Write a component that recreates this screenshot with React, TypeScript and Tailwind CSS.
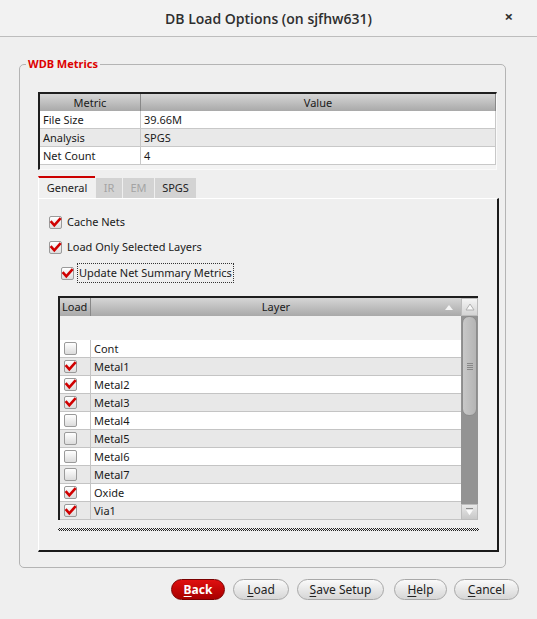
import React from 'react';

const FONT = { fontFamily: '"Noto Sans", "Open Sans", sans-serif' };

function Check({ on }: { on: boolean }) {
  return (
    <span className="relative inline-block w-[13px] h-[13px] rounded-[2px] border border-[#9a9a9a] bg-gradient-to-b from-[#ffffff] to-[#dcdcdc] shrink-0">
      {on && (
        <svg viewBox="0 0 13 13" className="absolute left-[-1px] top-[-1px] w-[13px] h-[13px]">
          <path d="M2.5 6.2 L5.3 9.3 L10.8 3.2" fill="none" stroke="#d00000" strokeWidth="2.6" strokeLinecap="square" strokeLinejoin="miter" />
        </svg>
      )}
    </span>
  );
}

function Btn({ label, w, primary }: { label: string; w: number; primary?: boolean }) {
  const first = label.charAt(0);
  const rest = label.slice(1);
  return (
    <button
      style={{ width: w }}
      className={
        primary
          ? 'h-[21px] rounded-full border border-[#7a0000] bg-gradient-to-b from-[#e01010] to-[#a80000] text-white font-bold text-[12px] leading-none'
          : 'h-[21px] rounded-full border border-[#a8a8a8] bg-gradient-to-b from-[#fafafa] to-[#d6d6d6] text-[#222] text-[12px] leading-none'
      }
    >
      <span className="underline underline-offset-2">{first}</span>
      {rest}
    </button>
  );
}

const metrics = [
  ['File Size', '39.66M'],
  ['Analysis', 'SPGS'],
  ['Net Count', '4'],
];

const layers: [string, boolean][] = [
  ['Cont', false],
  ['Metal1', true],
  ['Metal2', true],
  ['Metal3', true],
  ['Metal4', false],
  ['Metal5', false],
  ['Metal6', false],
  ['Metal7', false],
  ['Oxide', true],
  ['Via1', true],
];

export default function App() {
  return (
    <div style={FONT} className="w-[537px] h-[619px] bg-[#efefef] flex flex-col text-[11px] text-[#1a1a1a] overflow-hidden">
      {/* title bar */}
      <div className="relative h-[37px] shrink-0 bg-[#f2f2f2] border-b border-[#bdbdbd] flex items-center justify-center">
        <span style={{ fontFamily: '"Open Sans", "Noto Sans", sans-serif' }} className="text-[14px] text-[#2e2e2e] font-semibold">
          DB Load Options (on sjfhw631)
        </span>
        <span className="absolute right-[24px] top-[9px] text-[15px] font-bold text-[#2e2e2e] leading-none">×</span>
      </div>

      {/* group box */}
      <div className="relative ml-[19px] mt-[27px] w-[487px] h-[504px] border border-[#b4b4b4] rounded-[5px] pt-[27px] pl-[18px]">
        <span className="absolute left-[6px] top-[-9px] px-[2px] bg-[#efefef] text-[#dd0000] font-bold text-[11px] leading-[16px]">
          WDB Metrics
        </span>

        {/* metrics table */}
        <div className="w-[459px] h-[78px] border-t-2 border-l-2 border-[#1e1e1e] border-r border-b border-r-[#fafafa] border-b-[#fafafa] bg-[#f3f3f3]">
          <div className="flex h-[17px] bg-gradient-to-b from-[#d6d6d6] to-[#a9a9a9]">
            <div className="w-[101px] border-r border-[#888] text-center leading-[17px]">Metric</div>
            <div className="flex-1 text-center leading-[17px] border-r border-[#888]">Value</div>
          </div>
          {metrics.map(([k, v], i) => (
            <div key={k} className={`flex h-[18px] border-b border-[#c8c8c8] ${i === 1 ? 'bg-[#e9e9e9]' : 'bg-white'}`}>
              <div className="w-[101px] border-r border-[#c8c8c8] pl-[3px] leading-[17px]">{k}</div>
              <div className="flex-1 pl-[3px] leading-[17px] border-r border-[#c8c8c8]">{v}</div>
            </div>
          ))}
        </div>

        {/* tabs */}
        <div className="mt-[6px] flex h-[22px] items-end">
          <div className="h-[22px] w-[57px] border-t-2 border-[#cc0000] border-l border-l-white bg-[#f0f0f0] text-center leading-[19px] text-[#222]">General</div>
          <div className="h-[20px] w-[26px] ml-[1px] bg-[#d3d3d3] text-center leading-[20px] text-[#a4a4a4]">IR</div>
          <div className="h-[20px] w-[31px] ml-[1px] bg-[#d3d3d3] text-center leading-[20px] text-[#a4a4a4]">EM</div>
          <div className="h-[20px] w-[41px] ml-[1px] bg-[#d3d3d3] text-center leading-[20px] text-[#222]">SPGS</div>
        </div>

        {/* tab pane */}
        <div className="w-[461px] h-[354px] border-t border-l border-white border-r-2 border-b-2 border-r-[#1a1a1a] border-b-[#1a1a1a] pl-[10px] pt-[16px]">
          <div className="flex items-center gap-[5px] h-[14px]">
            <Check on />
            <span>Cache Nets</span>
          </div>
          <div className="flex items-center gap-[5px] h-[14px] mt-[11px]">
            <Check on />
            <span>Load Only Selected Layers</span>
          </div>
          <div className="flex items-center gap-[3px] h-[20px] mt-[9px] pl-[12px]">
            <Check on />
            <span className="border border-dotted border-[#333] px-[1px] leading-[18px]">Update Net Summary Metrics</span>
          </div>

          {/* layer table */}
          <div className="ml-[9px] mt-[13px] w-[420px] h-[224px] border-t-2 border-l-2 border-[#1e1e1e] flex">
            <div className="flex-1 flex flex-col bg-[#f0f0f0]">
              <div className="flex h-[18px] bg-gradient-to-b from-[#d6d6d6] to-[#a9a9a9] shrink-0">
                <div className="w-[31px] border-r border-[#888] pl-[2px] leading-[18px]">Load</div>
                <div className="relative flex-1 text-center leading-[18px]">
                  Layer
                  <svg viewBox="0 0 8 5" className="absolute right-[8px] top-[7px] w-[8px] h-[5px]">
                    <path d="M0 5 L4 0 L8 5 Z" fill="#f4f4f4" />
                  </svg>
                </div>
              </div>
              <div className="h-[24px] shrink-0" />
              {layers.map(([n, on], i) => (
                <div key={n} className={`flex h-[18px] shrink-0 border-b border-[#c4c4c4] ${i % 2 ? 'bg-[#e8e8e8]' : 'bg-white'}`}>
                  <div className="w-[31px] border-r border-[#c4c4c4] flex items-center pl-[4px]">
                    <Check on={on} />
                  </div>
                  <div className="flex-1 pl-[3px] leading-[17px]">{n}</div>
                </div>
              ))}
            </div>
            {/* scrollbar */}
            <div className="w-[17px] flex flex-col bg-[#939393]">
              <div className="h-[18px] shrink-0 bg-gradient-to-b from-[#f4f4f4] to-[#d4d4d4] border border-[#bcbcbc] flex items-center justify-center">
                <svg viewBox="0 0 10 8" className="w-[10px] h-[8px]">
                  <path d="M1 7 L5 1 L9 7 Z" fill="#fafafa" stroke="#b0b0b0" strokeWidth="1" />
                </svg>
              </div>
              <div className="h-[100px] shrink-0 mx-[1px] rounded-[7px] bg-gradient-to-r from-[#c8c8c8] to-[#b4b4b4] border border-[#8c8c8c] flex flex-col items-center justify-center gap-[1px]">
                <div className="w-[6px] h-px bg-[#888]" />
                <div className="w-[6px] h-px bg-[#888]" />
                <div className="w-[6px] h-px bg-[#888]" />
                <div className="w-[6px] h-px bg-[#888]" />
              </div>
              <div className="flex-1" />
              <div className="h-[16px] shrink-0 bg-gradient-to-b from-[#e8e8e8] to-[#c8c8c8] border border-[#bcbcbc] flex flex-col items-center justify-center gap-[1px]">
                <div className="w-[7px] h-px bg-[#8a8a8a]" />
                <svg viewBox="0 0 10 7" className="w-[9px] h-[6px]">
                  <path d="M1 0 L5 6 L9 0 Z" fill="#fafafa" />
                </svg>
              </div>
            </div>
          </div>

          {/* splitter handle */}
          <div
            className="ml-[9px] mt-[8px] w-[421px] h-[3px]"
            style={{ backgroundImage: 'repeating-conic-gradient(#222 0% 25%, #efefef 0% 50%)', backgroundSize: '2px 2px' }}
          />
        </div>
      </div>

      {/* buttons */}
      <div className="flex items-center mt-[11px] ml-[171px]">
        <Btn label="Back" w={54} primary />
        <div className="w-[8px]" />
        <Btn label="Load" w={56} />
        <div className="w-[8px]" />
        <Btn label="Save Setup" w={87} />
        <div className="w-[10px]" />
        <Btn label="Help" w={53} />
        <div className="w-[7px]" />
        <Btn label="Cancel" w={65} />
      </div>
    </div>
  );
}
